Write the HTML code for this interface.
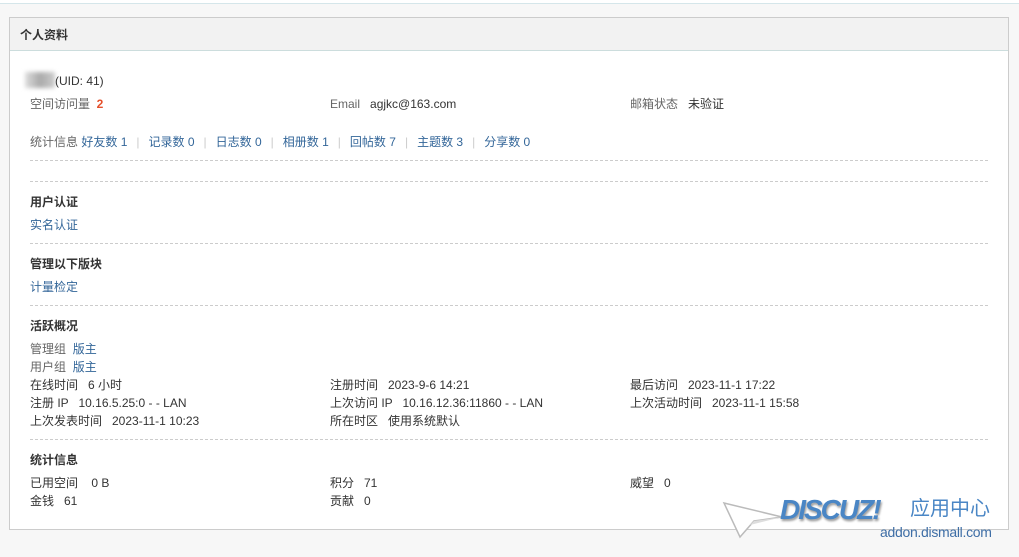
<!DOCTYPE html>
<html><head><meta charset="utf-8"><style>
body{margin:0;width:1019px;height:557px;background:#f7f7f7;font:12px "Liberation Sans","Noto Sans CJK SC",sans-serif;color:#333;position:relative;overflow:hidden}
.t{position:absolute;white-space:nowrap;line-height:14px;margin-top:1px}
a{color:#336699;text-decoration:none}
.g{color:#666}
.hr{position:absolute;left:30px;width:958px;border-top:1px dashed #ccc;height:0}
.b{font-weight:bold;color:#333}
.sep{color:#ccc;margin:0 9px}
</style></head><body>
<div style="position:absolute;left:0;top:0;width:1019px;height:3px;background:#fff;border-bottom:1px solid #d5e6ea"></div>
<div style="position:absolute;left:9px;top:17px;width:998px;height:511px;background:#fff;border:1px solid #ccc"></div>
<div style="position:absolute;left:10px;top:18px;width:998px;height:32px;background:#f2f2f2;border-bottom:1px solid #cdd"></div>
<div class="t b" style="left:20px;top:27px">个人资料</div>
<div style="position:absolute;left:25px;top:72px;width:30px;height:16px;background:linear-gradient(90deg,#ddd,#aaa,#ccc);filter:blur(2px)"></div>
<div class="t" style="left:55px;top:73px">(UID: 41)</div>
<div class="t g" style="left:30px;top:96px">空间访问量 &nbsp;<b style="color:#e5502b">2</b></div>
<div class="t" style="left:330px;top:96px"><span class="g">Email</span> &nbsp; agjkc@163.com</div>
<div class="t" style="left:630px;top:96px"><span class="g">邮箱状态</span> &nbsp; 未验证</div>
<div class="t" style="left:30px;top:134px"><span class="g">统计信息</span> <a>好友数 1</a><span class="sep">|</span><a>记录数 0</a><span class="sep">|</span><a>日志数 0</a><span class="sep">|</span><a>相册数 1</a><span class="sep">|</span><a>回帖数 7</a><span class="sep">|</span><a>主题数 3</a><span class="sep">|</span><a>分享数 0</a></div>
<div class="hr" style="top:160px"></div>
<div class="hr" style="top:181px"></div>
<div class="t b" style="left:30px;top:194px">用户认证</div>
<div class="t" style="left:30px;top:217px"><a>实名认证</a></div>
<div class="hr" style="top:243px"></div>
<div class="t b" style="left:30px;top:256px">管理以下版块</div>
<div class="t" style="left:30px;top:279px"><a>计量检定</a></div>
<div class="hr" style="top:305px"></div>
<div class="t b" style="left:30px;top:318px">活跃概况</div>
<div class="t" style="left:30px;top:341px"><span class="g">管理组</span> &nbsp;<a>版主</a></div>
<div class="t" style="left:30px;top:359px"><span class="g">用户组</span> &nbsp;<a>版主</a></div>
<div class="t" style="left:30px;top:377px">在线时间 &nbsp; 6 小时</div>
<div class="t" style="left:330px;top:377px">注册时间 &nbsp; 2023-9-6 14:21</div>
<div class="t" style="left:630px;top:377px">最后访问 &nbsp; 2023-11-1 17:22</div>
<div class="t" style="left:30px;top:395px">注册 IP &nbsp; 10.16.5.25:0 - - LAN</div>
<div class="t" style="left:330px;top:395px">上次访问 IP &nbsp; 10.16.12.36:11860 - - LAN</div>
<div class="t" style="left:630px;top:395px">上次活动时间 &nbsp; 2023-11-1 15:58</div>
<div class="t" style="left:30px;top:413px">上次发表时间 &nbsp; 2023-11-1 10:23</div>
<div class="t" style="left:330px;top:413px">所在时区 &nbsp; 使用系统默认</div>
<div class="hr" style="top:439px"></div>
<div class="t b" style="left:30px;top:452px">统计信息</div>
<div class="t" style="left:30px;top:475px">已用空间 &nbsp;&nbsp; 0 B</div>
<div class="t" style="left:330px;top:475px">积分 &nbsp; 71</div>
<div class="t" style="left:630px;top:475px">威望 &nbsp; 0</div>
<div class="t" style="left:30px;top:493px">金钱 &nbsp; 61</div>
<div class="t" style="left:330px;top:493px">贡献 &nbsp; 0</div>
<svg style="position:absolute;left:720px;top:495px" width="70" height="45"><polygon points="4,8 62,22 34,26 20,42" fill="#fff" stroke="#bbb" stroke-width="1.5"/><polygon points="34,26 62,22 30,30" fill="#ddd"/></svg>
<div class="t" style="left:780px;top:494px;font:italic bold 28px 'Liberation Sans',sans-serif;color:#4a86c5;line-height:30px;letter-spacing:-2px;text-shadow:1px 2px 2px #999">DISCUZ!</div>
<div class="t" style="left:910px;top:496px;font-size:20px;color:#4a86c5;line-height:24px">应用中心</div>
<div class="t" style="left:880px;top:523px;font-size:14px;color:#3e6ea6;line-height:16px;letter-spacing:-0.3px">addon.dismall.com</div>
</body></html>
